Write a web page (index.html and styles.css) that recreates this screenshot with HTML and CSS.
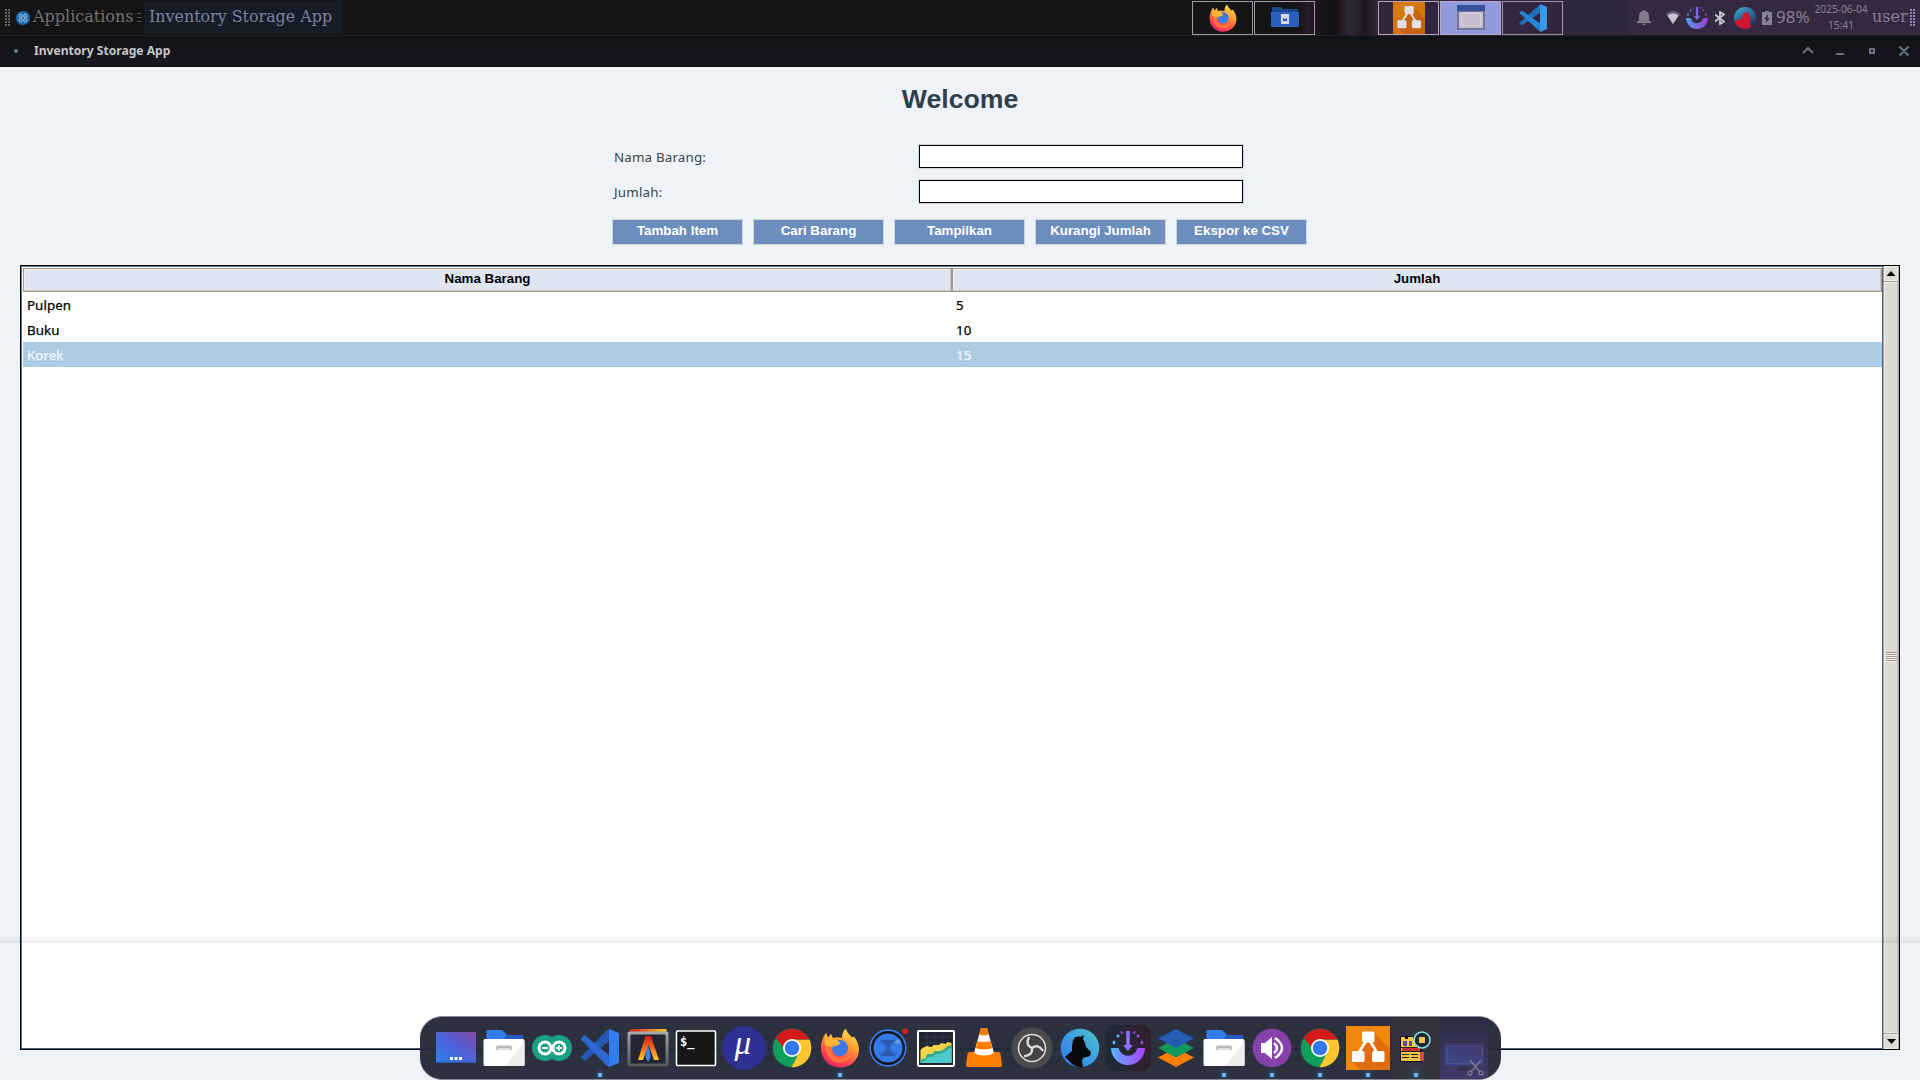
FILE: index.html
```html
<!DOCTYPE html>
<html lang="id">
<head>
<meta charset="utf-8">
<title>Inventory Storage App</title>
<link rel="stylesheet" href="styles.css">
</head>
<body>
<svg class="defs" width="0" height="0">
  <defs>
    <linearGradient id="g-purple" x1="0" y1="1" x2="1" y2="0"><stop offset="0" stop-color="#2f80f4"/><stop offset=".5" stop-color="#4c62d8"/><stop offset="1" stop-color="#8748a8"/></linearGradient>
    <linearGradient id="g-fox" x1=".8" y1="0" x2=".3" y2="1"><stop offset="0" stop-color="#ffe24d"/><stop offset=".4" stop-color="#ff9a2e"/><stop offset=".75" stop-color="#ff4450"/><stop offset="1" stop-color="#e8206a"/></linearGradient>
    <linearGradient id="g-smile" x1="0" y1="0" x2="1" y2="0"><stop offset="0" stop-color="#58b4ff"/><stop offset="1" stop-color="#b03cf8"/></linearGradient>
    <linearGradient id="g-sky" x1="0" y1="1" x2="1" y2="0"><stop offset="0" stop-color="#2f74f0"/><stop offset="1" stop-color="#4cc4cc"/></linearGradient>
    <linearGradient id="g-night" x1=".8" y1="1" x2=".3" y2="0"><stop offset="0" stop-color="#15255c"/><stop offset="1" stop-color="#3e9cc4"/></linearGradient>
    <linearGradient id="g-flame" x1="0" y1="0" x2="0" y2="1"><stop offset="0" stop-color="#d81818"/><stop offset="1" stop-color="#ffc828"/></linearGradient>
    <linearGradient id="g-rim" x1="0" y1="0" x2="0" y2="1"><stop offset="0" stop-color="#aaa"/><stop offset="1" stop-color="#555"/></linearGradient>
    <linearGradient id="g-top" x1="0" y1="0" x2="1" y2="0"><stop offset="0" stop-color="#d81818"/><stop offset="1" stop-color="#ffcc33"/></linearGradient>
  </defs>
  <symbol id="firefox" viewBox="0 0 48 48">
    <path fill="url(#g-fox)" d="M5 24C5 17 7 13 10 9l2 5 3-4 2 4c3-1 6-1 9 0C26 9 28 6 30 4.500c1 5 4 6 6 9l2-1c3 4 5 8 5 13 0 10-8 18-19 18S5 35 5 24z"/>
    <circle cx="24" cy="24" r="8" fill="#3b78e8"/>
    <path fill="#ff7a38" d="M9 20c3-3 6-4 10-3l4 3c-2 2-5 2-7 3-2 4 0 9 6 11 6 1 11-3 12-8 2 8-4 13-10 13C15 39 9 31 9 20z" opacity=".85"/>
    <path fill="#ffb838" d="M10 9l2 5 3-4 2 5c3 0 7 2 7 5-2 2-6 1-8 3l-6-1c-2-3-2-9 0-13z"/>
  </symbol>
  <symbol id="chrome" viewBox="0 0 48 48">
    <circle cx="24" cy="24" r="19.300" fill="#0f9d58"/>
    <path fill="#ffc531" d="M24 15.500h17.300A19.300 19.300 0 0 1 23.500 43.300L31.400 28.300z"/>
    <path fill="#d31919" d="M7.700 14A19.300 19.300 0 0 1 41.300 15.500H24A8.600 8.600 0 0 0 15.700 24z"/>
    <circle cx="24" cy="24" r="9" fill="#fff"/><circle cx="24" cy="24" r="7.300" fill="#3478f0"/>
  </symbol>
  <symbol id="vscode" viewBox="0 0 48 48">
    <path fill="#2459b4" d="M4.500 33.500l4.500 3.500L34 16V4.800L31 6z"/>
    <path fill="#2d67cf" d="M4.500 15l4-4L34 32v11l-3-1z"/>
    <path fill="#347cf0" d="M33 4.800l10 4.500v29.400L33 43.200z"/>
  </symbol>
  <symbol id="vscode-mini" viewBox="0 0 48 48">
    <path fill="#1d6fb8" d="M0 33l5 4L37 14V0z"/>
    <path fill="#2483d2" d="M0 15l5-4 32 23v14z"/>
    <path fill="#3999e8" d="M36 0l12 5v38l-12 5z"/>
  </symbol>
  <symbol id="diagram" viewBox="0 0 48 48">
    <path fill="#f08707" d="M2 2h44v44H2z"/><path fill="#df6d0d" d="M29 8l17 17v21H16l-7-8 14-20z"/>
    <path stroke="#fff" stroke-width="2.600" d="M22 17l-8 13M26 17l8 13"/>
    <g fill="#fff"><rect x="18" y="7.500" width="12.500" height="11" rx="1.800"/><rect x="8" y="27" width="12.500" height="11" rx="1.800"/><rect x="28" y="27" width="12.500" height="11" rx="1.800"/></g>
  </symbol>
  <symbol id="folder" viewBox="0 0 48 48">
    <path fill="#347af0" d="M6.500 7q0-1 1-1H21q1 0 2 1l4 4h15.500v7H6.500z"/><path fill="#2459c0" d="M25 13l2-2h15.500v5H23z"/>
    <rect x="3.500" y="15" width="41" height="27" rx="1.500" fill="#fff"/><path fill="#eee" d="M44.500 18v22.500q0 1.500-1.500 1.500H25z"/>
    <path fill="#bbb" d="M16 25v-1.500q0-2 2-2h12q2 0 2 2V25q0 1-1 1H17q-1 0-1-1z"/><path fill="#ddd" d="M18 24h12v2H18z"/>
  </symbol>
  <symbol id="smile" viewBox="0 0 48 48">
    <path fill="url(#g-smile)" d="M7 24h7.500a9.700 9.700 0 0 0 19 0H41a17 17 0 0 1-34 0z"/>
    <path fill="#8a70ff" d="M22.200 7h3.600v14H29l-5 6-5-6h3.200z"/>
    <path fill="none" stroke="#58b4ff" stroke-width="2.500" d="M9.500 20l1-3M13 13l2-2"/><path fill="none" stroke="#b03cf8" stroke-width="2.500" d="M38.500 20l-1-3M35 13l-2-2M17 9l1.500-.8M31 9l-1.500-.8"/>
  </symbol>
</svg>

<header class="panel">
  <i class="grip grip-left"></i>
  <svg class="menu-icon" viewBox="0 0 14 14"><circle cx="7" cy="7" r="7" fill="#1d6fb4"/><g fill="none" stroke="#b9c6d0" stroke-width=".9"><circle cx="4.800" cy="4.800" r="1.600"/><circle cx="9.200" cy="4.800" r="1.600"/><circle cx="4.800" cy="9.200" r="1.600"/><circle cx="9.200" cy="9.200" r="1.600"/></g></svg>
  <span class="menu-label">Applications</span>
  <i class="separator"></i>
  <span class="task">Inventory Storage App</span>
  <nav class="pager">
    <span class="window"><svg width="34" height="34"><use href="#firefox"/></svg></span>
    <span class="window"><svg width="28" height="22" viewBox="0 0 28 22"><path fill="#1c468e" d="M1 0h9l2 2h15v4H1z"/><path fill="#2b60bd" d="M0 5h28v14q0 1-1 1H1q-1 0-1-1z"/><path fill="#d5d9e6" d="M10 7h8v10h-8z"/><path fill="#2b60bd" d="M12 11h1v1h2v-1h1v3h-4z"/></svg></span>
    <span class="window after-gap"><svg class="dim" width="32" height="32" viewBox="2 2 44 44"><use href="#diagram" width="48" height="48"/></svg></span>
    <span class="window active"><svg width="28" height="25" viewBox="0 0 28 25"><path fill="#777596" d="M0 0h28v25H0z"/><path fill="#36519a" d="M0 0h28v6H0z"/><path fill="#c5bdcf" d="M2 7h24v16H2z"/><path fill="none" stroke="#dad1dd" d="M4.500 8.500h19v12h-19z"/></svg></span>
    <span class="window"><svg width="28" height="28"><use href="#vscode-mini"/></svg></span>
  </nav>
  <div class="tray">
    <svg class="bell" viewBox="0 0 14 15"><path fill="#83798f" d="M6 0h2v1q4 .5 4 5v4l2 2v1H0v-1l2-2V6q0-4.500 4-5zM5 13.500h4L8 15H6z"/></svg>
    <svg class="wifi" viewBox="0 0 14 13"><path fill="#6b617a" d="M0 3q7-6 14 0L7 13z"/><path fill="#cdc4d4" d="M1.500 4.500q5.500-4 11 0L7 13z"/></svg>
    <svg class="pull dim" viewBox="7 7 34 34"><use href="#smile" width="48" height="48"/></svg>
    <svg class="bt" viewBox="0 0 10 14"><path fill="none" stroke="#cdc4d4" stroke-width="1.800" d="M0 3.500l9 7L5 13V1l4 2.500-9 7"/></svg>
    <svg class="wolf" viewBox="0 0 22 22"><circle cx="11" cy="11" r="11" fill="url(#g-night)"/><path fill="#cb1732" d="M10 5l2 1.500L14 4l1 4 2 4-1 3 1 5q-6 4-12 0-4-3-4-6l6-2 2-4z"/></svg>
    <svg class="battery" viewBox="0 0 10 14"><path fill="#8b8196" d="M3 0h4v1h3v13H0V1h3z"/><path fill="#30263d" d="M6 3L2 8h2.500L4 12l4-5H5.500z"/></svg>
    <span class="percent">98%</span>
    <span class="clock"><span>2025-06-04</span><span>15:41</span></span>
    <span class="user">user</span>
    <i class="grip grip-right"></i>
  </div>
</header>

<div class="titlebar">
  <i class="bullet"></i>
  <span class="title">Inventory Storage App</span>
  <svg class="controls" width="108" height="12" viewBox="0 0 108 12"><g fill="none" stroke="#6f7088" stroke-width="2"><path d="M1 8l5-5 5 5M34 9h8M68 4h4v4h-4zM97.500 1.500l9 9M106.500 1.500l-9 9"/></g></svg>
</div>

<main class="app">
  <h1>Welcome</h1>
  <form class="form">
    <label for="nama">Nama Barang:</label><input id="nama" type="text">
    <label for="jumlah">Jumlah:</label><input id="jumlah" type="text">
  </form>
  <div class="actions">
    <button>Tambah Item</button><button>Cari Barang</button><button>Tampilkan</button><button>Kurangi Jumlah</button><button>Ekspor ke CSV</button>
  </div>
  <section class="frame">
    <div class="table">
      <div class="row head"><span>Nama Barang</span><span>Jumlah</span></div>
      <div class="row"><span>Pulpen</span><span>5</span></div>
      <div class="row"><span>Buku</span><span>10</span></div>
      <div class="row selected"><span>Korek</span><span>15</span></div>
    </div>
    <div class="scrollbar">
      <span class="arrow"><i class="up"></i></span>
      <span class="thumb"><i class="ridges"></i></span>
      <span class="arrow"><i class="down"></i></span>
    </div>
  </section>
  <div class="dock-shadow"></div>
</main>

<footer class="dock">
  <span class="item"><svg><path fill="url(#g-purple)" d="M4 8h40v31H4z"/><path fill="#315bb9" d="M4 37.500h40V39H4z"/><path fill="#fff" d="M18 33h3v3h-3zM22.500 33h3v3h-3zM27 33h3v3h-3z"/></svg></span>
  <span class="item"><svg><use href="#folder"/></svg></span>
  <span class="item"><svg><path fill="#18a085" d="M17 11q4 0 7 2 3-2 7-2a12.900 12.900 0 0 1 0 26q-4 0-7-2-3 2-7 2a12.900 12.900 0 0 1 0-26z"/><g fill="none" stroke="#fff" stroke-width="3"><circle cx="17" cy="24" r="6"/><circle cx="31" cy="24" r="6"/></g><path stroke="#fff" stroke-width="1.800" d="M14 24h6M28 24h6M31 21v6"/></svg></span>
  <span class="item running"><svg><use href="#vscode"/></svg></span>
  <span class="item"><svg><rect x="5.500" y="5" width="37" height="8" rx="1" fill="url(#g-top)"/><rect x="3.500" y="7.500" width="41" height="35" rx="2" fill="url(#g-rim)"/><rect x="6.500" y="10.500" width="35" height="29" rx="1" fill="#232531"/><path fill="url(#g-flame)" d="M21.500 12h5.500l8 24h-5l-5.500-15L19 36h-5z"/><path fill="#3b82f0" d="M24 22q5 11 0 16-5-5 0-16z"/></svg></span>
  <span class="item"><svg><rect x="4.500" y="7" width="39" height="34.500" rx="1" fill="#171717" stroke="#fff" stroke-width="1.600"/><text class="prompt" x="8" y="22">$_</text></svg></span>
  <span class="item"><svg><circle cx="24" cy="24" r="22" fill="#2e3192"/><text class="mu" x="14.500" y="30">μ</text></svg></span>
  <span class="item"><svg><use href="#chrome"/></svg></span>
  <span class="item running"><svg><use href="#firefox"/></svg></span>
  <span class="item"><svg><circle cx="24" cy="24" r="17.800" fill="#15171f" stroke="#347be8" stroke-width="1.700"/><circle cx="24" cy="24" r="14.500" fill="#347be8"/><path fill="#275bad" d="M17 15l7 6 7-6 1 2-6 7 6 7-1 2-7-6-7 6-1-2 6-7-6-7z" opacity=".5"/><path fill="#275bad" d="M17 16h14l-7 8zM17 32h14l-7-8z"/><path fill="#8cb9ef" opacity=".6" d="M30 18l5-3 2 4-4 1z"/><circle cx="41.300" cy="7.200" r="2.800" fill="#df1c22"/></svg></span>
  <span class="item"><svg><rect x="6" y="7" width="36" height="35" rx="1" fill="#20242f" stroke="#fff" stroke-width="2"/><path fill="none" stroke="#30394d" d="M10 13h29M10 19h29M15 9v16M23 9v16M31 9v11"/><path fill="#f2d34b" d="M8.500 26l2-2 4-2 5 1 2-2 5 0 3-2 4 1 2-2 4 1V39h-31z"/><path fill="#35a889" d="M8.500 36l5-2 2-4 5 0 2-3 6 0 4-2 3-3 4-1v18h-31z"/><path fill="#4bc9cd" d="M8.500 38l4-1 3-4 5 0 3-3 6 0 4-3 3-2 3-1v15h-31z"/></svg></span>
  <span class="item"><svg><path fill="#ff7e00" d="M10 28h28q2 0 2.500 2l1.500 11q0 2-2 2H8q-2 0-2-2l1.500-11q.5-2 2.500-2z"/><path fill="#fff" d="M22 4h4q1 0 1.500 2L34 29q-10 5-20 0l6.500-23Q21 4 22 4z"/><path fill="#ff7e00" d="M22 4h4q1 0 1.500 2l1.200 4.500q-4.700 2-9.400 0L20.500 6Q21 4 22 4zM17.700 17q6.300 2 12.600 0l2 7q-8.300 3-16.600 0z"/></svg></span>
  <span class="item"><svg><circle cx="24" cy="24" r="20.500" fill="#4b4b4b"/><circle cx="24" cy="24" r="13.500" fill="#444" stroke="#ddd" stroke-width="1.500"/><g fill="none" stroke="#ddd" stroke-width="2.400"><path d="M24 24q-7-3-3-11"/><path d="M24 24q-7-3-3-11" transform="rotate(120 24 24)"/><path d="M24 24q-7-3-3-11" transform="rotate(240 24 24)"/></g></svg></span>
  <span class="item"><svg><circle cx="24" cy="24" r="19.300" fill="url(#g-sky)"/><path fill="#080a0e" d="M17 16l2-2-1-1 3 0 1-1 2 1 4-2-1 4 2 4 1 4 5 5-1 4-7 2-1 3 1 6q-8 1-14-6l-4-4 7-6 0-5z"/></svg></span>
  <span class="item tile"><svg><use href="#smile"/></svg></span>
  <span class="item"><svg><path fill="#ff7e00" d="M6 33.500L24 24l18 9.500L24 43z"/><path fill="#14975b" d="M6 24l18-9.500L42 24l-18 9.500z"/><path fill="#245db6" d="M6 14.500L24 5l18 9.500L24 24z"/></svg></span>
  <span class="item running"><svg><use href="#folder"/></svg></span>
  <span class="item running"><svg><circle cx="24" cy="24" r="19.300" fill="#8741ab"/><path fill="#fff" d="M13 19h4l7-6v22l-7-6h-4z"/><path fill="none" stroke="#fff" stroke-width="2.600" d="M26 19q6 5 0 10M27 14q14 10 0 20"/></svg></span>
  <span class="item running"><svg><use href="#chrome"/></svg></span>
  <span class="item running"><svg><use href="#diagram"/></svg></span>
  <span class="item running launching"><svg><path fill="#111" d="M8 12h22v26H8z"/><path fill="#f0c64b" d="M9 13h4v2h3v-2h5v2h3v-2h4v22H9zM9 35h20v2H9z"/><path fill="#614b95" d="M11 17h4v5h-4zM17 17h3v5h-3z"/><path fill="#d13131" d="M10 24h18v3H10z"/><path fill="#222" d="M9 23h19v1H9zM9 27h20v1H9zM10 30h7v1h-7zM10 33h7v1h-7zM19 30h7v1h-7zM19 33h7v1h-7z"/><path stroke="#e34b4b" stroke-width="3.600" d="M30 28v9"/><circle cx="30" cy="16" r="8" fill="#1e2935" stroke="#8bdcdf" stroke-width="1.600"/><path fill="#f0c64b" d="M27 13h6v6h-6z"/></svg></span>
  <span class="item ghost"><svg><path fill="url(#g-purple)" stroke="#555a86" d="M4.500 19.500h39v22h-39z" opacity=".26"/><path fill="none" stroke="#7878aa" stroke-dasharray="1 1" d="M7.500 22.500h35v17h-35z" opacity=".5"/><path fill="#34334f" d="M20 42h9l2 5H17z"/><g fill="none" stroke="#82809a" stroke-width="1.200"><path d="M30 36l10 12M41 36L31 48"/><circle cx="30" cy="49" r="2"/><circle cx="41" cy="49" r="2"/></g></svg></span>
</footer>
</body>
</html>
```
FILE: styles.css
```css
* { box-sizing: border-box; }
body {
  margin: 0;
  width: 1920px;
  height: 1080px;
  overflow: hidden;
  display: flex;
  flex-direction: column;
  position: relative;
  background: #eff3f8;
  font-family: "Noto Sans", sans-serif;
  font-size: 13.33px;
}
.defs { position: absolute; }
svg { display: block; flex: none; }

/* Desktop panel */
.panel {
  height: 35px;
  flex: none;
  display: flex;
  align-items: center;
  padding: 0 5px;
  font-family: "DejaVu Serif", serif;
  font-size: 16px;
  color: #737373;
  background: linear-gradient(90deg, #141414 0 1295px, #241c28 1308px, #151315 1322px, #151217 1337px, #33273a 1349px, #1d1722 1366px, #33263a 1377px, #33263f 1500px, #30253f 1627px, #342940 1628px);
}
.grip { width: 5px; height: 17px; background: repeating-linear-gradient(180deg, #646464 0 2px, transparent 2px 3px); -webkit-mask: repeating-linear-gradient(90deg, #000 0 2px, transparent 2px 3px); }
.menu-icon { width: 14px; height: 14px; margin: 0 3px 0 6px; }
.menu-label { width: 103px; white-space: nowrap; margin-top: -2px; }
.separator { width: 4px; height: 10px; margin: 0 3px 0 1px; background: repeating-linear-gradient(180deg, #555 0 1px, transparent 1px 4px); }
.task { width: 198px; height: 33px; line-height: 31px; padding-left: 5px; font-size: 15.900px; background: #151c25; color: #7e82a3; white-space: nowrap; }
.pager { margin-left: 850px; display: flex; gap: 1px; }
.window { width: 61px; height: 34px; border: 1px solid #a197a5; display: flex; align-items: center; justify-content: center; overflow: hidden; }
.window.after-gap { margin-left: 62px; border-color: #b7a3bc; }
.window.active { background: #929ade; border-color: #b6a6c8; }
.dim { opacity: .86; }
.tray { margin-left: auto; display: flex; align-items: center; color: #8b8096; }
.bell { width: 14px; height: 15px; margin-right: 15px; }
.wifi { width: 14px; height: 13px; margin-right: 6px; }
.pull { width: 22px; height: 22px; margin-right: 7px; }
.bt { width: 10px; height: 14px; margin-right: 9px; }
.wolf { width: 22px; height: 22px; margin-right: 6px; }
.battery { width: 10px; height: 14px; margin-right: 4px; }
.percent { width: 38px; margin-top: -3px; font-family: "Noto Sans", sans-serif; font-size: 17px; }
.clock { width: 54px; margin-top: -1px; font-family: "Noto Sans", sans-serif; font-size: 10.200px; line-height: 16px; display: flex; flex-direction: column; align-items: center; white-space: nowrap; }
.user { width: 42px; padding-left: 4px; margin-top: -2px; }
.grip-right { background: repeating-linear-gradient(180deg, #9484b8 0 2px, transparent 2px 3px); }

/* Window title bar */
.titlebar {
  height: 32px;
  flex: none;
  display: flex;
  align-items: center;
  padding: 0 10px 0 14px;
  border-top: 1px solid #211f2a;
  border-bottom: 1px solid #100f14;
  background: linear-gradient(#111217, #181822);
  color: #c6c6c6;
}
.bullet { width: 4px; height: 4px; border-radius: 50%; background: #70748f; margin-right: 16px; }
.title { font-weight: 700; font-size: 12.100px; margin-top: -2px; white-space: nowrap; }
.controls { margin-left: auto; }

/* Application */
.app { flex: 1; position: relative; display: flex; flex-direction: column; align-items: center; }
h1 { margin: 17px 0 30px; font: 700 26.67px/30px "Liberation Sans", sans-serif; color: #2f3f4b; }
.form { width: 695px; display: grid; grid-template-columns: 304px 326px; grid-auto-rows: 25px; gap: 10px 0; align-items: center; color: #36454f; padding-left: 2px; margin-right: 1px; }
.form label { letter-spacing: .18px; }
.form input { width: 326px; height: 25px; margin: 0; padding: 0; border: 1px solid #d5d7db; outline: 1px solid #000; outline-offset: -2px; background: #fff; }
.actions { display: flex; gap: 10px; margin: 15px 1px 20px 0; }
.actions button { width: 131px; height: 26px; padding: 0 0 3px; border: 1px solid #d0d4dc; background: #6c8ebf; color: #fff; font: 700 13.33px/20px "Liberation Sans", sans-serif; }
.frame { width: 1880px; height: 785px; border: 1px solid #000; background: #fff; display: flex; box-shadow: inset 1px 1px #5b7e98, inset 0 -1px #3d5f84; }
.table { flex: 1; padding: 2px 0 0 2px; }
.row { display: grid; grid-template-columns: 929px 930px; height: 25px; line-height: 27px; color: #000; -webkit-text-stroke: .25px; letter-spacing: .05px; }
.row span { padding-left: 4px; }
.row.head { height: 24px; font: 700 13.33px/19px "Liberation Sans", sans-serif; text-align: center; -webkit-text-stroke: 0; letter-spacing: 0; }
.row.head span { padding: 0; background: #dfe6f2; border: 1px solid #9f9990; box-shadow: inset -1px -1px #c9c7c2, inset 1px 1px #f3f2ef; }
.row.selected { background: #adcbe3; color: #f2f8fd; }
.scrollbar { width: 17px; border-left: 1px solid #456b8e; border-right: 1px solid #aaa49b; padding-left: 1px; display: flex; flex-direction: column; background: #a29e94; gap: 1px; }
.arrow { height: 15px; display: grid; place-items: center; background: #dcdbd6; border: 1px solid #efeee7; }
.up, .down { width: 9px; height: 5px; background: #000; clip-path: polygon(50% 0, 100% 100%, 0 100%); }
.down { transform: rotate(180deg); }
.thumb { flex: 1; display: grid; place-items: center; padding-bottom: 2px; background: #dcdbd6; border: 1px solid #efeee7; border-right-color: #c9c0b6; }
.ridges { width: 11px; height: 10px; background: repeating-linear-gradient(180deg, #9f9b92 0 1px, #efeee7 1px 2px); }
.dock-shadow { position: absolute; left: 0; right: 0; top: 868px; height: 8px; background: linear-gradient(transparent, rgba(0, 0, 0, .07)); }

/* Dock */
.dock {
  position: absolute;
  left: 420px;
  top: 1016px;
  width: 1081px;
  height: 64px;
  padding: 0 12px;
  display: flex;
  align-items: center;
  overflow: hidden;
  border: 1px solid #85879a;
  border-width: 1px 0;
  border-radius: 22px;
  background: rgba(38, 41, 56, .97);
}
.item { position: relative; width: 48px; height: 62px; flex: none; padding-top: 7px; }
.item svg { width: 48px; height: 48px; overflow: visible; }
.running::after { content: ""; position: absolute; left: 22px; bottom: 2px; width: 4px; height: 4px; border-radius: 1px; background: #72b8ec; box-shadow: 0 0 5px 2px rgba(55, 130, 190, .4); }
.tile::before { content: ""; position: absolute; left: 1px; top: 8px; width: 46px; height: 46px; border-radius: 9px; background: linear-gradient(90deg, #202a38, #30202f); }
.tile svg { position: relative; }
.launching { background: #33343f; }
.ghost { background: linear-gradient(#2a2c40, #38355c 60%, #403a6a); }
.prompt { font: 700 12px "DejaVu Sans Mono", monospace; fill: #fff; }
.mu { font: italic 33px "Liberation Serif", serif; fill: #fff; }
```
